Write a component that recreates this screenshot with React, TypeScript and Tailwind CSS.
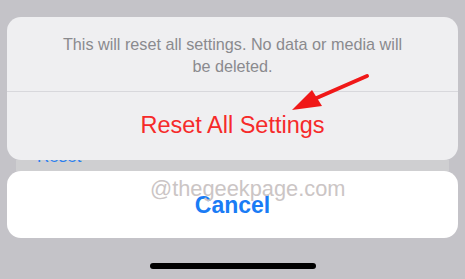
import React from "react";

export default function App() {
  return (
    <div
      className="relative w-[465px] h-[279px] overflow-hidden bg-[#c4c3c8] pt-[17px] px-[7px]"
      style={{ fontFamily: '"Liberation Sans", Arial, sans-serif' }}
    >
      <div className="relative z-10 h-[143px] rounded-[14px] bg-[#efeff1] flex flex-col">
        <div className="h-[74px] pt-[16px] text-center text-[16.2px] leading-[22px] text-[#8a8a8e]">
          This will reset all settings. No data or media will
          <br />
          be deleted.
        </div>
        <div className="h-px bg-[#d8d8dc]" />
        <div className="flex-1 flex items-center justify-center text-[23.5px] text-[#f62a2a]">
          Reset All Settings
        </div>
      </div>
      <div className="relative mx-[9px] h-[11px] overflow-hidden bg-[#cfcfd1]">
        <div className="absolute left-[21px] top-[-12px] text-[17px] leading-[17px] text-[#2a7ff0]">
          Reset
        </div>
      </div>
      <div className="relative h-[67px] rounded-[14px] bg-white flex items-center justify-center">
        <span className="text-[23px] font-bold text-[#1a7cf5] pt-[1px]">Cancel</span>
        <div className="absolute left-[143px] top-[4px] text-[21.8px] leading-[28px] text-[#cbc5c5]">
          @thegeekpage.com
        </div>
      </div>
      <div className="mx-auto mt-[25px] w-[166px] h-[6px] rounded-full bg-black" />
      <svg
        className="absolute left-0 top-0 z-20"
        width="465"
        height="279"
        viewBox="0 0 465 279"
      >
        <line x1="367" y1="76" x2="312" y2="100" stroke="#f01818" strokeWidth="4" strokeLinecap="round" />
        <polygon points="292,110 312,90 322,106" fill="#f01818" />
      </svg>
    </div>
  );
}
